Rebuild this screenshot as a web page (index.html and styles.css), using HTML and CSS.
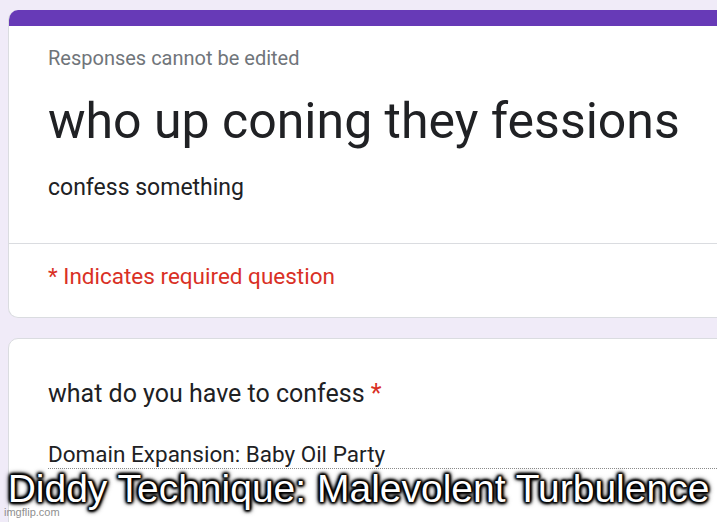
FILE: index.html
```html
<!DOCTYPE html>
<html>
<head>
<meta charset="utf-8">
<link rel="stylesheet" href="styles.css">
</head>
<body>
<div class="page">
  <div class="card header-card">
    <div class="topbar"></div>
    <div class="header-body">
      <div class="note">Responses cannot be edited</div>
      <h1 class="title">who up coning they fessions</h1>
      <div class="desc">confess something</div>
    </div>
    <div class="required">* Indicates required question</div>
  </div>
  <div class="card question-card">
    <div class="question">what do you have to confess <span class="star">*</span></div>
    <div class="answer">Domain Expansion: Baby Oil Party</div>
  </div>
</div>
<div class="caption">Diddy Technique: Malevolent Turbulence</div>
<div class="watermark">imgflip.com</div>
</body>
</html>
```
FILE: styles.css
```css
html, body {
  margin: 0;
  padding: 0;
  width: 717px;
  height: 522px;
  overflow: hidden;
  background: #f0ebf8;
  font-family: Roboto, "Liberation Sans", Arial, sans-serif;
}
.page {
  padding: 10px 0 0 8px;
  display: flex;
  flex-direction: column;
  gap: 20px;
}
.card {
  width: 740px;
  background: #fff;
  border: 1px solid #dadce0;
  border-radius: 10px;
  box-sizing: border-box;
  overflow: hidden;
}
.header-card {
  border-top: none;
}
.topbar {
  height: 16px;
  background: #673ab7;
}
.header-body {
  padding: 20px 0 0 39px;
  height: 218px;
  box-sizing: border-box;
  border-bottom: 1px solid #dadce0;
}
.note {
  font-size: 20px;
  color: #70757a;
  line-height: 24px;
}
.title {
  margin: 21px 0 0;
  font-weight: 400;
  font-size: 50px;
  line-height: 60px;
  color: #202124;
}
.desc {
  margin-top: 23px;
  font-size: 23px;
  line-height: 28px;
  color: #202124;
}
.required {
  padding: 19px 0 0 39px;
  height: 73px;
  box-sizing: border-box;
  font-size: 22.5px;
  line-height: 26px;
  color: #d93025;
}
.question-card {
  height: 200px;
  padding: 40px 0 0 39px;
}
.question {
  font-size: 25px;
  line-height: 30px;
  color: #202124;
}
.star {
  color: #d93025;
}
.answer {
  margin-top: 32px;
  font-size: 22.5px;
  line-height: 26px;
  color: #202124;
  padding-bottom: 1px;
  border-bottom: 1px dotted #8a8a8a;
}
.caption {
  position: absolute;
  left: 0;
  top: 473px;
  width: 717px;
  text-align: center;
  font-family: "Liberation Sans", Arial, sans-serif;
  font-size: 39px;
  line-height: 32px;
  color: #fff;
  white-space: nowrap;
  text-shadow: 0 0 2px #000, 0 0 2px #000, 0 0 3px #000, 0 0 4px #000, 0 0 5px #000, 0 0 6px #000, 1px 1px 3px #000, -1px -1px 3px #000, 1px -1px 3px #000, -1px 1px 3px #000;
}
.watermark {
  position: absolute;
  left: 4px;
  top: 507px;
  font-family: "Liberation Sans", Arial, sans-serif;
  font-size: 11px;
  line-height: 10px;
  color: #8f8f8f;
}
```
